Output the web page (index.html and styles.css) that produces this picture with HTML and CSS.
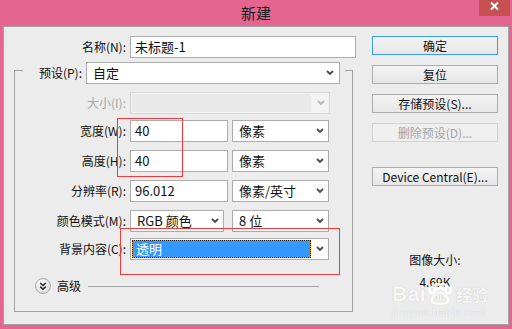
FILE: index.html
```html
<!DOCTYPE html>
<html lang="zh-CN">
<head>
<meta charset="utf-8">
<title>新建</title>
<link rel="stylesheet" href="styles.css">
</head>
<body>
<div class="window">
  <div class="titlebar">
    <span class="title">新建</span>
    <span class="close"><svg width="31" height="16" viewBox="0 0 31 16"><path d="M12 2.5 L19 9.5 M19 2.5 L12 9.5" stroke="#fff" stroke-width="2" fill="none"/></svg></span>
  </div>
  <div class="client">
    <div class="form">
      <div class="row name-row">
        <span class="label">名称(N):</span>
        <div class="field w-name">未标题-1</div>
      </div>
      <fieldset class="group">
        <legend><div class="legend-row">
          <span class="label l-preset">预设(P):</span>
          <div class="select w-preset"><span class="val">自定</span><svg class="chev" width="8" height="6" viewBox="0 0 8 6"><path d="M1 1 L4 4 L7 1" stroke="#4a4a4a" stroke-width="1.8" fill="none"/></svg></div>
        </div></legend>
        <div class="row r-size">
          <span class="label disabled">大小(I):</span>
          <div class="select dis w-size"><span class="inner"></span><svg class="chev" width="8" height="6" viewBox="0 0 8 6"><path d="M1 1 L4 4 L7 1" stroke="#b8b8b8" stroke-width="1.8" fill="none"/></svg></div>
        </div>
        <div class="row r-width">
          <span class="label">宽度(W):</span>
          <div class="field w-num">40</div>
          <div class="select w-unit"><span class="val">像素</span><svg class="chev" width="8" height="6" viewBox="0 0 8 6"><path d="M1 1 L4 4 L7 1" stroke="#4a4a4a" stroke-width="1.8" fill="none"/></svg></div>
        </div>
        <div class="row r-std">
          <span class="label">高度(H):</span>
          <div class="field w-num">40</div>
          <div class="select w-unit"><span class="val">像素</span><svg class="chev" width="8" height="6" viewBox="0 0 8 6"><path d="M1 1 L4 4 L7 1" stroke="#4a4a4a" stroke-width="1.8" fill="none"/></svg></div>
        </div>
        <div class="row r-std">
          <span class="label">分辨率(R):</span>
          <div class="field w-num">96.012</div>
          <div class="select w-unit"><span class="val">像素/英寸</span><svg class="chev" width="8" height="6" viewBox="0 0 8 6"><path d="M1 1 L4 4 L7 1" stroke="#4a4a4a" stroke-width="1.8" fill="none"/></svg></div>
        </div>
        <div class="row r-std">
          <span class="label">颜色模式(M):</span>
          <div class="select w-mode"><span class="val">RGB 颜色</span><svg class="chev" width="8" height="6" viewBox="0 0 8 6"><path d="M1 1 L4 4 L7 1" stroke="#4a4a4a" stroke-width="1.8" fill="none"/></svg></div>
          <div class="select w-unit bits"><span class="val">8 位</span><svg class="chev" width="8" height="6" viewBox="0 0 8 6"><path d="M1 1 L4 4 L7 1" stroke="#4a4a4a" stroke-width="1.8" fill="none"/></svg></div>
        </div>
        <div class="row r-bg">
          <span class="label">背景内容(C):</span>
          <div class="select w-bg"><span class="sel">透明</span><svg class="chev" width="8" height="6" viewBox="0 0 8 6"><path d="M1 1 L4 4 L7 1" stroke="#4a4a4a" stroke-width="1.8" fill="none"/></svg></div>
        </div>
        <div class="advanced">
          <span class="adv-icon"><svg width="16" height="16" viewBox="0 0 16 16"><defs><radialGradient id="g" cx="0.4" cy="0.35" r="0.7"><stop offset="0" stop-color="#ffffff"/><stop offset="1" stop-color="#dcdcdc"/></radialGradient></defs><circle cx="8" cy="8" r="7.5" fill="url(#g)" stroke="#a9a9a9"/><path d="M5.2 5 L8 7.6 L10.8 5 M5.2 8.6 L8 11.2 L10.8 8.6" stroke="#222" stroke-width="1.5" fill="none"/></svg></span>
          <span class="adv-text">高级</span>
          <span class="adv-line"></span>
        </div>
      </fieldset>
    </div>
    <div class="side">
      <div class="btn default">确定</div>
      <div class="btn">复位</div>
      <div class="btn">存储预设(S)...</div>
      <div class="btn disabled">删除预设(D)...</div>
      <div class="btn device">Device Central(E)...</div>
      <div class="imgsize">
        <span class="is-label">图像大小:</span>
        <span class="is-val">4.69K</span>
      </div>
    </div>
  </div>
  <div class="mark mark1"></div>
  <div class="mark mark2"></div>
  <div class="watermark">
    <div class="wm-logo"><span class="wm-bai">Bai</span><span class="wm-paw"><svg width="26" height="22" viewBox="0 0 26 22"><g fill="none" stroke="rgba(255,255,255,0.9)" stroke-width="2"><ellipse cx="5" cy="7" rx="2.6" ry="3.3"/><ellipse cx="10.5" cy="3.6" rx="2.6" ry="3"/><ellipse cx="16" cy="3.6" rx="2.6" ry="3"/><ellipse cx="21.3" cy="7" rx="2.6" ry="3.3"/><path d="M13 9.5 C9 9.5 4 15 5 18.5 C6 21 9 20.5 13 20.5 C17 20.5 20 21 21 18.5 C22 15 17 9.5 13 9.5 Z"/></g></svg><span class="wm-du">du</span></span><span class="wm-jy">经验</span></div>
    <div class="wm-url">jingyan.baidu.com</div>
  </div>
</div>
</body>
</html>
```
FILE: styles.css
```css
* { box-sizing: border-box; }
html, body { margin: 0; padding: 0; }
body {
  font-family: "Noto Sans CJK SC", "Noto Sans", sans-serif;
  font-size: 12px;
  color: #111;
  background: #e4658f;
}
.window {
  position: relative;
  width: 512px;
  height: 329px;
  background: #e4658f;
  padding: 0 3px 4px 3px;
  display: flex;
  flex-direction: column;
  overflow: hidden;
}
.titlebar {
  height: 26px;
  flex: none;
  display: grid;
  grid-template-columns: 1fr auto 1fr;
  align-items: center;
}
.title {
  grid-column: 2;
  font-size: 15px;
  line-height: 20px;
  color: #1c1c1c;
  margin-top: -1px;
}
.close {
  grid-column: 3;
  justify-self: end;
  align-self: start;
  width: 31px;
  height: 16px;
  margin-right: -1px;
  background: #c75050;
  display: block;
}
.close svg { display: block; }
.client {
  flex: 1;
  background: #ececec;
  border: 1px solid #a3a3a3;
  display: flex;
}
.form {
  width: 356px;
  flex: none;
  padding-top: 9px;
}
.row {
  display: flex;
  align-items: center;
  height: 22px;
}
.label {
  flex: none;
  text-align: right;
  line-height: 22px;
  white-space: nowrap;
  width: 111px;
  margin-right: 4px;
}
.name-row .label { width: 122px; }
.label.disabled { color: #a6a6a6; }
.field, .select {
  height: 22px;
  background: #fff;
  border: 1px solid #acacac;
  display: flex;
  align-items: center;
  flex: none;
  white-space: nowrap;
  line-height: 20px;
}
.field { padding-left: 4px; font-size: 13px; }
.select { justify-content: space-between; padding: 0 4px 0 6px; font-size: 13px; }
.chev { display: block; flex: none; }
.w-name { width: 226px; }
.w-preset { width: 254px; padding-right: 5px; }
.w-size { width: 200px; padding: 1px 4px 1px 1px; }
.w-num { width: 98px; }
.w-unit { width: 97px; margin-left: 4px; }
.w-mode { width: 94px; }
.bits { margin-left: 8px; }
.w-bg { width: 199px; padding: 1px 4px 1px 1px; }
.select.dis {
  background: #f3f3f3;
  border-color: #d6d6d6;
}
.select.dis .inner {
  width: 179px;
  height: 18px;
  background: #e9e9e9;
}
.sel {
  width: 179px;
  height: 18px;
  border: 1px dotted #1a1a1a;
  background: linear-gradient(#3399ff, #3399ff) padding-box, linear-gradient(#e8962a, #e8962a) border-box;
  color: #fff;
  padding-left: 3px;
  line-height: 16px;
}
.group {
  margin: 4px 0 0 10px;
  width: 339px;
  border: 1px solid #a2a2a2;
  padding: 14px 0 17px 0;
  min-width: 0;
}
.group legend {
  margin-left: 8px;
  padding: 0 5px 0 0;
  height: 16px;
}
.legend-row {
  display: flex;
  align-items: flex-start;
  height: 16px;
}
.legend-row .label.l-preset { width: 59px; }
.r-width { margin-top: 6px; }
.r-std { margin-top: 8px; }
.r-bg { margin-top: 6px; }
.advanced {
  display: flex;
  align-items: center;
  height: 16px;
  margin-top: 18px;
  padding-left: 20px;
  padding-right: 33px;
}
.adv-icon { width: 16px; height: 16px; flex: none; }
.adv-icon svg { display: block; }
.adv-text { margin-left: 6px; line-height: 16px; font-size: 12px; }
.adv-line { flex: 1; height: 1px; background: #a4a4a4; margin-left: 7px; }
.side {
  margin-left: 12px;
  width: 126px;
  padding-top: 9px;
  display: flex;
  flex-direction: column;
  gap: 10px;
}
.btn {
  height: 19px;
  border: 1px solid #acacac;
  background: linear-gradient(#f3f3f3, #e7e7e7);
  display: flex;
  align-items: center;
  justify-content: center;
  line-height: 17px;
  font-size: 12px;
  white-space: nowrap;
}
.btn.default { border-color: #3c9cf0; }
.btn.disabled { color: #a4a4a4; border-color: #d2d2d2; background: #efefef; }
.btn.device { margin-top: 15px; font-size: 12px; }
.imgsize {
  margin-top: 56px;
  display: flex;
  flex-direction: column;
  align-items: center;
  gap: 6px;
  line-height: 16px;
}
.is-label, .is-val { font-size: 12px; color: #111; }
.mark {
  position: absolute;
  border: 1px solid #ef3b3b;
  pointer-events: none;
}
.mark1 { left: 117px; top: 118px; width: 66px; height: 59px; }
.mark2 { left: 120px; top: 228px; width: 220px; height: 47px; }
.watermark {
  position: absolute;
  left: 392px;
  top: 281px;
  color: rgba(255, 255, 255, 0.88);
  text-shadow: 0 0 1px rgba(0, 0, 0, 0.22);
  font-family: "Liberation Sans", sans-serif;
  pointer-events: none;
}
.wm-logo { display: flex; align-items: flex-end; height: 24px; }
.wm-bai { font-size: 21px; font-weight: bold; line-height: 22px; letter-spacing: 0.5px; }
.wm-paw {
  position: relative;
  width: 26px;
  height: 22px;
  margin-left: 1px;
}
.wm-paw svg { display: block; }
.wm-du {
  position: absolute;
  left: 6px;
  top: 9px;
  font-size: 10px;
  font-weight: bold;
  line-height: 11px;
}
.wm-jy { font-family: "Noto Sans CJK SC", sans-serif; font-size: 16px; font-weight: bold; line-height: 21px; margin-left: 3px; }
.wm-url { font-size: 11px; line-height: 12px; margin-top: 1px; letter-spacing: 0.3px; }
```
